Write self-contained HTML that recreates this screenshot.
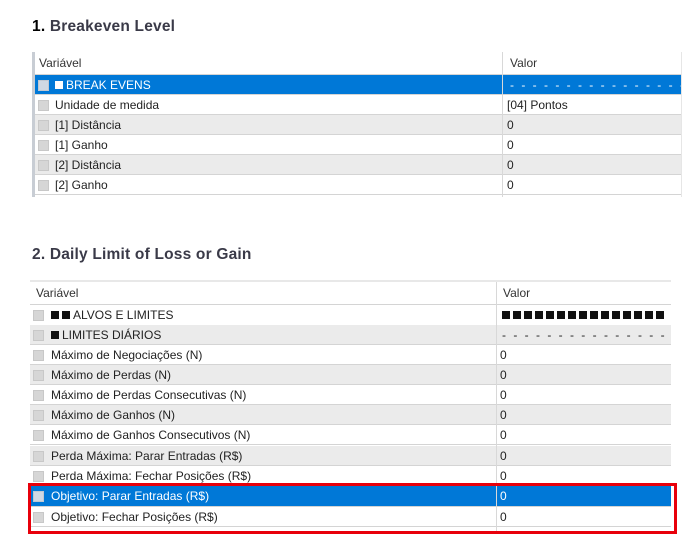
<!DOCTYPE html>
<html><head><meta charset="utf-8">
<style>
*{margin:0;padding:0;box-sizing:border-box}
body{width:697px;height:557px;background:#fff;position:relative;overflow:hidden;font-family:"Liberation Sans",sans-serif;}
.h{position:absolute;font-size:15.5px;font-weight:bold;color:#3a3a48;letter-spacing:0.2px}
.h b{color:#000}
.t{position:absolute;font-family:"Liberation Sans",sans-serif;font-size:12px;color:#222}
.r{position:absolute;left:0;right:0;height:20px;border-bottom:1px solid #d4d4d4;line-height:21px;white-space:nowrap;overflow:hidden}
.g{background:#ebebeb}
.s{background:#0078d7;color:#fff}
.cb{position:absolute;left:3px;top:5px;width:11px;height:11px;background:#d6d6d6;border:1px solid #c8c8c8}
.s .cb{background:#cfd8e3;border-color:#c0c8d2}
.l{position:absolute;left:20px}
.t2 .l{left:21px}
.v{position:absolute}
.hd{position:absolute;left:0;right:0;top:0;height:23px;line-height:22px;border-bottom:1px solid #d4d4d4;color:#333}
.div{position:absolute;top:0;bottom:0;width:1px;background:#d8d8d8}
.sq{display:inline-block;width:8px;height:8px;background:#111;margin-right:3px;vertical-align:0px}
.s .sq{background:#fff}
.dash{letter-spacing:2px}
</style></head><body>
<div class="h" style="left:32px;top:18px"><b>1.</b> Breakeven Level</div>
<div class="t" style="left:32px;top:52px;width:650px;height:145px;border-left:3px solid #c8cdd4;">
 <div class="hd"><span style="position:absolute;left:4px">Variável</span><span style="position:absolute;left:475px">Valor</span></div>
 <div class="r s" style="top:23px"><div class="cb"></div><span class="l"><span class="sq"></span>BREAK EVENS</span><span class="v dash" style="left:475px">- - - - - - - - - - - - - - - - - - - - -</span></div>
 <div class="r" style="top:43px"><div class="cb"></div><span class="l">Unidade de medida</span><span class="v" style="left:472px">[04] Pontos</span></div>
 <div class="r g" style="top:63px"><div class="cb"></div><span class="l">[1] Distância</span><span class="v" style="left:472px">0</span></div>
 <div class="r" style="top:83px"><div class="cb"></div><span class="l">[1] Ganho</span><span class="v" style="left:472px">0</span></div>
 <div class="r g" style="top:103px"><div class="cb"></div><span class="l">[2] Distância</span><span class="v" style="left:472px">0</span></div>
 <div class="r" style="top:123px"><div class="cb"></div><span class="l">[2] Ganho</span><span class="v" style="left:472px">0</span></div>
 <div class="div" style="left:467px"></div>
 <div class="div" style="left:646px;background:#e6e6e6"></div>
</div>

<div class="h" style="left:32px;top:246px">2. Daily Limit of Loss or Gain</div>
<div class="t t2" style="left:30px;top:280px;width:641px;height:252px;border-top:2px solid #e8e8e8">
 <div class="hd" style="height:23px"><span style="position:absolute;left:6px">Variável</span><span style="position:absolute;left:473px">Valor</span></div>
 <div class="r" style="top:23px;border-bottom:none"><div class="cb"></div><span class="l"><span class="sq"></span><span class="sq"></span>ALVOS E LIMITES</span><span class="v" style="left:472px;letter-spacing:0"><span class="sq"></span><span class="sq"></span><span class="sq"></span><span class="sq"></span><span class="sq"></span><span class="sq"></span><span class="sq"></span><span class="sq"></span><span class="sq"></span><span class="sq"></span><span class="sq"></span><span class="sq"></span><span class="sq"></span><span class="sq"></span><span class="sq"></span></span></div>
 <div class="r g" style="top:43px"><div class="cb"></div><span class="l"><span class="sq"></span>LIMITES DIÁRIOS</span><span class="v dash" style="left:472px">- - - - - - - - - - - - - - - - - - - - -</span></div>
 <div class="r" style="top:63px"><div class="cb"></div><span class="l">Máximo de Negociações (N)</span><span class="v" style="left:470px">0</span></div>
 <div class="r g" style="top:83px"><div class="cb"></div><span class="l">Máximo de Perdas (N)</span><span class="v" style="left:470px">0</span></div>
 <div class="r" style="top:103px"><div class="cb"></div><span class="l">Máximo de Perdas Consecutivas (N)</span><span class="v" style="left:470px">0</span></div>
 <div class="r g" style="top:123px"><div class="cb"></div><span class="l">Máximo de Ganhos (N)</span><span class="v" style="left:470px">0</span></div>
 <div class="r" style="top:143px"><div class="cb"></div><span class="l">Máximo de Ganhos Consecutivos (N)</span><span class="v" style="left:470px">0</span></div>
 <div class="r g" style="top:164px"><div class="cb"></div><span class="l">Perda Máxima: Parar Entradas (R$)</span><span class="v" style="left:470px">0</span></div>
 <div class="r" style="top:184px"><div class="cb"></div><span class="l">Perda Máxima: Fechar Posições (R$)</span><span class="v" style="left:470px">0</span></div>
 <div class="r s" style="top:204px;height:21px"><div class="cb"></div><span class="l">Objetivo: Parar Entradas (R$)</span><span class="v" style="left:470px">0</span></div>
 <div class="r" style="top:225px"><div class="cb"></div><span class="l">Objetivo: Fechar Posições (R$)</span><span class="v" style="left:470px">0</span></div>
 <div class="div" style="left:466px"></div>
</div>
<div style="position:absolute;left:28px;top:483px;width:649px;height:51px;border:3px solid #e8000b"></div>
</body></html>
